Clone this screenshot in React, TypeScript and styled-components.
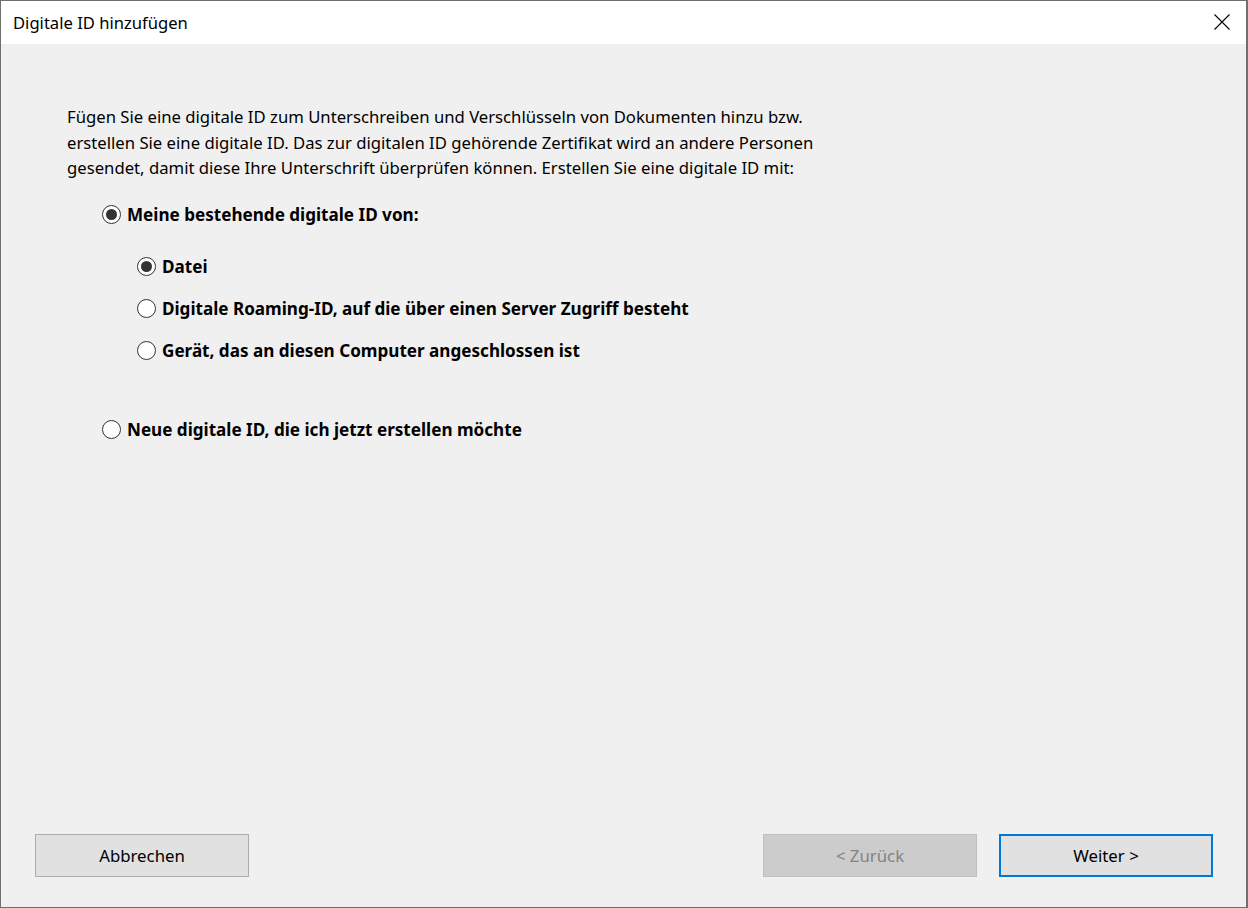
import React, { FunctionComponent } from 'react';
import styled, { createGlobalStyle } from 'styled-components';

const GlobalStyle = createGlobalStyle`
	html, body {
		margin: 0;
		padding: 0;
		background: #f0f0f0;
	}
	body {
		font-family: 'Noto Sans', 'Open Sans', sans-serif;
		color: #000;
	}
`;

const Window = styled.div`
	box-sizing: border-box;
	width: 1248px;
	height: 908px;
	display: flex;
	flex-direction: column;
	background: #f0f0f0;
	border: 1px solid #6f6f6f;
	border-right-width: 2px;
`;

const TitleBar = styled.div`
	height: 43px;
	flex-shrink: 0;
	display: flex;
	align-items: center;
	justify-content: space-between;
	background: #fff;
	padding-left: 12px;
	padding-right: 15px;
	font-size: 16.6px;
`;

const CloseButton = styled.div`
	width: 18px;
	height: 18px;
	display: flex;
	align-items: center;
	justify-content: center;
	margin-bottom: 2px;
`;

const Body = styled.div`
	flex: 1;
	padding: 60px 0 0 66px;
`;

const Intro = styled.p`
	margin: 0;
	white-space: nowrap;
	font-size: 16.7px;
	line-height: 25.5px;
`;

const Options = styled.div`
	display: flex;
	flex-direction: column;
	margin-top: 21px;
	margin-left: 35px;
`;

const SubOptions = styled.div`
	display: flex;
	flex-direction: column;
	gap: 16px;
	margin: 26px 0 0 35px;
`;

const OptionRow = styled.label<{ $gapTop?: number }>`
	display: flex;
	align-items: center;
	gap: 6px;
	height: 26px;
	font-size: 17.1px;
	font-weight: 700;
	margin-top: ${props => props.$gapTop ?? 0}px;
`;

const Circle = styled.span<{ $checked?: boolean }>`
	box-sizing: border-box;
	width: 19px;
	height: 19px;
	border-radius: 50%;
	border: 1px solid #333;
	background: #fff;
	display: flex;
	align-items: center;
	justify-content: center;

	&::after {
		content: '';
		display: ${props => (props.$checked ? 'block' : 'none')};
		width: 11px;
		height: 11px;
		border-radius: 50%;
		background: #333;
	}
`;

const Footer = styled.div`
	display: flex;
	align-items: center;
	padding: 0 33px 30px 34px;
`;

const Spacer = styled.div`
	flex: 1;
`;

const Button = styled.button<{ $variant?: 'default' | 'disabled' | 'focused' }>`
	box-sizing: border-box;
	width: 214px;
	height: 43px;
	font-family: inherit;
	font-size: 16.8px;
	border: ${props => (props.$variant === 'focused' ? '2px solid #0078d7' : '1px solid #adadad')};
	border-color: ${props => (props.$variant === 'disabled' ? '#bfbfbf' : undefined)};
	background: ${props => (props.$variant === 'disabled' ? '#cccccc' : '#e1e1e1')};
	color: ${props => (props.$variant === 'disabled' ? '#838383' : '#000')};
	padding: 0;

	& + & {
		margin-left: 22px;
	}
`;

interface RadioProps {
	checked?: boolean;
	gapTop?: number;
	label: string;
}

const Radio: FunctionComponent<RadioProps> = ({ checked, gapTop, label }) => (
	<OptionRow $gapTop={gapTop}>
		<Circle $checked={checked} />
		<span>{label}</span>
	</OptionRow>
);

const App: FunctionComponent = () => (
	<>
		<GlobalStyle />
		<Window>
			<TitleBar>
				<span>Digitale ID hinzufügen</span>
				<CloseButton>
					<svg width='16' height='16' viewBox='0 0 16 16'>
						<path d='M0.5 0.5 L15.5 15.5 M15.5 0.5 L0.5 15.5' stroke='#000' strokeWidth='1.1' fill='none' />
					</svg>
				</CloseButton>
			</TitleBar>
			<Body>
				<Intro>
					Fügen Sie eine digitale ID zum Unterschreiben und Verschlüsseln von Dokumenten hinzu bzw.
					<br />
					erstellen Sie eine digitale ID. Das zur digitalen ID gehörende Zertifikat wird an andere Personen
					<br />
					gesendet, damit diese Ihre Unterschrift überprüfen können. Erstellen Sie eine digitale ID mit:
				</Intro>
				<Options>
					<Radio checked label='Meine bestehende digitale ID von:' />
					<SubOptions>
						<Radio checked label='Datei' />
						<Radio label='Digitale Roaming-ID, auf die über einen Server Zugriff besteht' />
						<Radio label='Gerät, das an diesen Computer angeschlossen ist' />
					</SubOptions>
					<Radio gapTop={53} label='Neue digitale ID, die ich jetzt erstellen möchte' />
				</Options>
			</Body>
			<Footer>
				<Button $variant='default'>Abbrechen</Button>
				<Spacer />
				<Button $variant='disabled'>&lt; Zurück</Button>
				<Button $variant='focused'>Weiter &gt;</Button>
			</Footer>
		</Window>
	</>
);

export default App;
